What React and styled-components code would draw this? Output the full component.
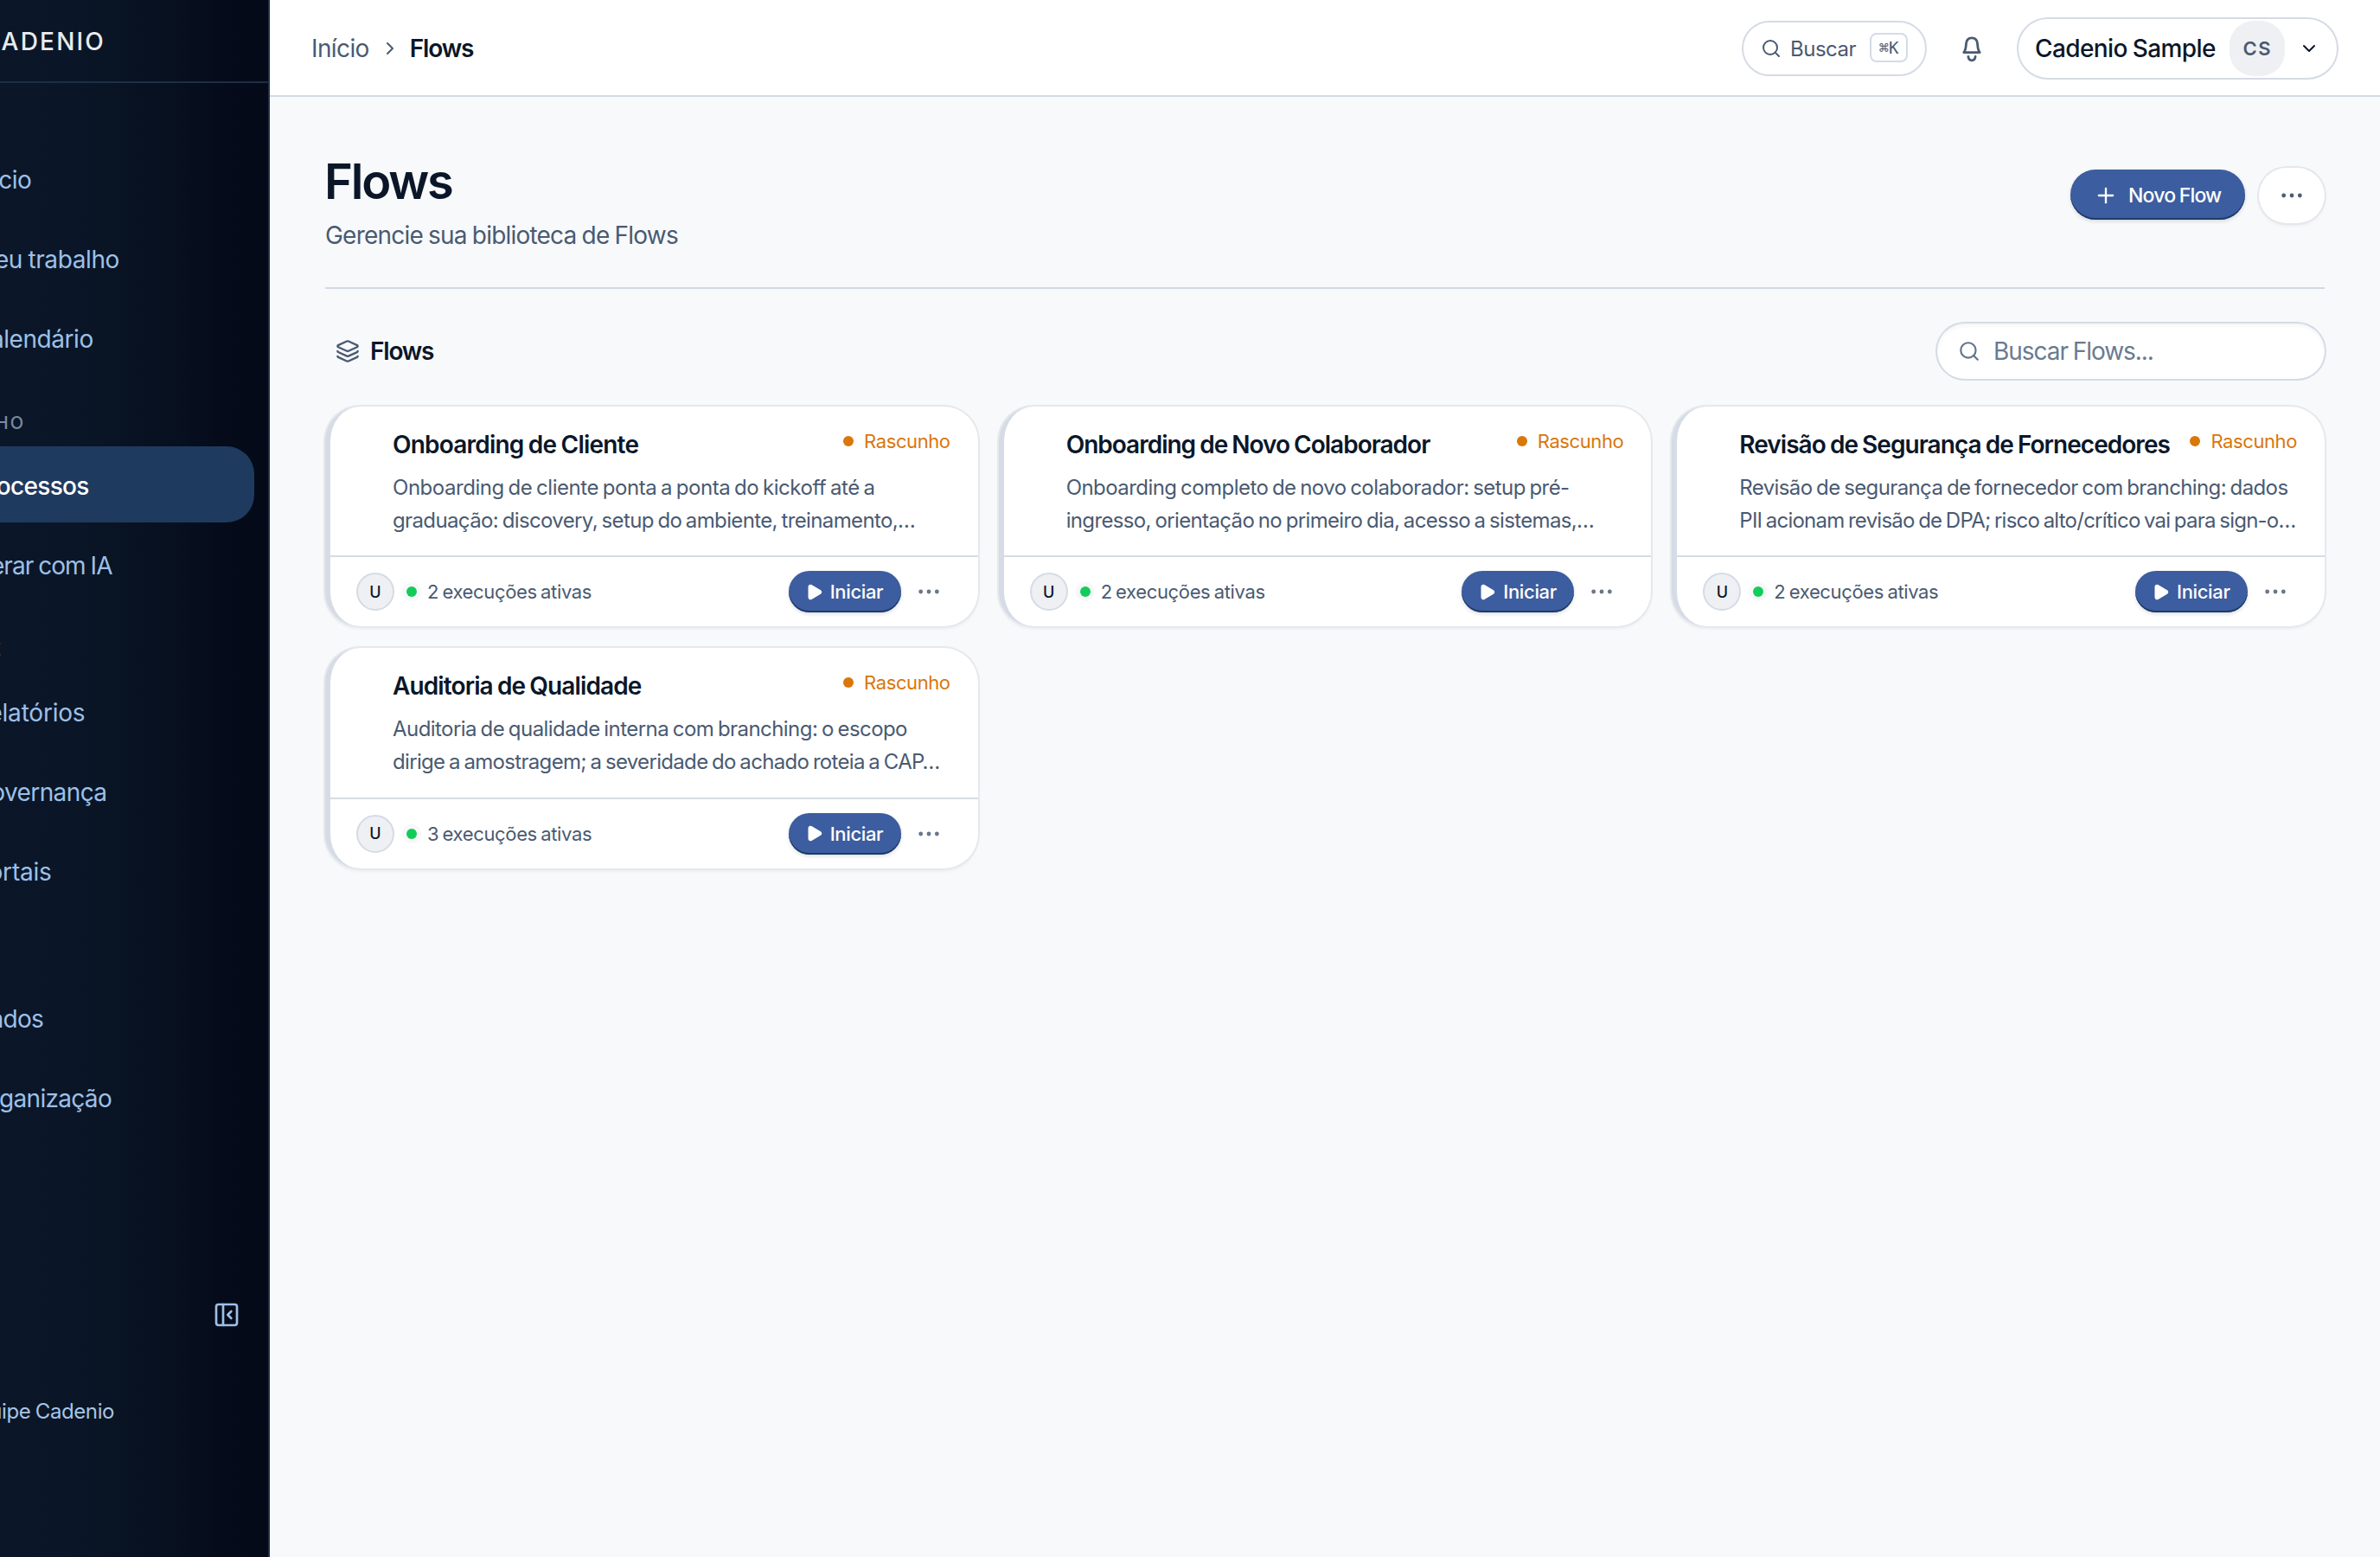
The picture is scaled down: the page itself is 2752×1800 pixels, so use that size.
import React from 'react';
import styled, { createGlobalStyle } from 'styled-components';
import {
  ChevronDown,
  ChevronRight,
  Ellipsis,
  Layers,
  PanelLeftClose,
  Play,
  Plus,
  Search,
} from 'lucide-react';

const GlobalStyle = createGlobalStyle`
  * {
    box-sizing: border-box;
  }
  body {
    margin: 0;
    background: #f8f9fb;
    color: #0b1729;
    font-family: Inter, 'Liberation Sans', sans-serif;
    overflow: hidden;
  }
  button {
    font-family: inherit;
    cursor: pointer;
  }
  h1, h2, h3, p {
    margin: 0;
  }
`;

const Page = styled.div`
  display: flex;
  width: 100%;
  height: 1800px;
`;

/* ---------- sidebar ---------- */

const Sidebar = styled.aside`
  display: flex;
  flex-direction: column;
  flex: none;
  width: 312px;
  overflow: hidden;
  border-right: 2px solid #1e2f46;
  background: linear-gradient(90deg, #0b1728 0%, #0a1627 28%, #081222 50%, #07101f 66%, #050b1a 82%, #050a19 100%);
  white-space: nowrap;
`;

const Brand = styled.div`
  display: flex;
  align-items: center;
  flex: none;
  height: 96px;
  padding-top: 2px;
  border-bottom: 2px solid #1d2e48;
  color: #e9ebee;
  font-size: 28px;
  font-weight: 500;
  letter-spacing: 2.2px;

  span {
    margin-left: -20.5px;
  }
`;

const Nav = styled.nav`
  padding-top: 66px;
  margin-left: -98px;
`;

const NavGroup = styled.div`
  display: flex;
  flex-direction: column;
  gap: 4px;
`;

const NavLabel = styled.div`
  display: flex;
  align-items: flex-end;
  height: 82px;
  padding: 0 0 17px 2px;
  color: #7e8a9c;
  font-size: 20px;
  font-weight: 500;
  line-height: 20px;
  letter-spacing: 2px;
`;

const NavItem = styled.a`
  display: flex;
  align-items: center;
  height: 88px;
  margin-right: 16px;
  padding: 3px 0 0 67px;
  border-radius: 32px;
  background: ${({ $active }) => ($active ? '#1f3a5f' : 'transparent')};
  color: ${({ $active }) => ($active ? '#ffffff' : '#9dc0e8')};
  font-size: 28px;
  font-weight: ${({ $active }) => ($active ? 500 : 400)};
  letter-spacing: ${({ $tracking }) => $tracking}px;
  word-spacing: -1px;
`;

const SidebarFooter = styled.div`
  display: flex;
  flex-direction: column;
  gap: 81px;
  margin-top: auto;
  padding-bottom: 153px;
`;

const CollapseButton = styled.button`
  display: flex;
  align-self: flex-end;
  margin-right: 32px;
  padding: 0;
  border: 0;
  background: none;
  color: #9dc0e8;
`;

const Team = styled.div`
  margin-left: -40px;
  color: #a9c4e4;
  font-size: 24px;
  line-height: 30px;
  letter-spacing: -0.4px;
  word-spacing: -1px;
`;

/* ---------- top bar ---------- */

const Main = styled.main`
  flex: 1;
  min-width: 0;
`;

const TopBar = styled.header`
  display: flex;
  align-items: center;
  justify-content: space-between;
  height: 112px;
  padding: 2px 48px 0;
  border-bottom: 2px solid #d3d9e5;
  background: #ffffff;
`;

const Breadcrumb = styled.div`
  display: flex;
  align-items: center;
  gap: 12px;
  color: #4a5a71;
  font-size: 28px;
  letter-spacing: -0.6px;

  strong {
    margin-left: -1px;
    color: #0b1729;
    font-weight: 600;
    letter-spacing: -1.2px;
  }
`;

const TopActions = styled.div`
  display: flex;
  align-items: center;
`;

const QuickSearch = styled.button`
  display: flex;
  align-items: center;
  width: 214px;
  height: 64px;
  padding: 0 20px;
  border: 2px solid #d5dbe6;
  border-radius: 32px;
  background: #ffffff;
  color: #4a5a71;
  font-size: 24px;
  letter-spacing: -0.5px;

  span {
    margin-left: 10px;
  }
`;

const Kbd = styled.kbd`
  display: flex;
  align-items: center;
  justify-content: center;
  width: 44px;
  height: 34px;
  margin: -2px 0 0 auto;
  border: 2px solid #d5dbe6;
  border-radius: 8px;
  font: 19px 'DejaVu Sans Mono', monospace;
  letter-spacing: 0;
`;

const BellButton = styled.button`
  display: flex;
  margin: 0 36px;
  padding: 0;
  border: 0;
  background: none;
  color: #4a5a71;
`;

const UserMenu = styled.button`
  display: flex;
  align-items: center;
  justify-content: space-between;
  width: 372px;
  height: 72px;
  padding: 0 20px 0 19px;
  border: 2px solid #d5dbe6;
  border-radius: 36px;
  background: #ffffff;
  color: #0b1729;
  font-size: 28px;
  font-weight: 500;
  letter-spacing: -0.6px;
  word-spacing: -1px;
`;

const UserAvatar = styled.span`
  display: flex;
  align-items: center;
  justify-content: center;
  width: 64px;
  height: 64px;
  padding-left: 1px;
  border-radius: 28px;
  background: #eff0f4;
  color: #4a5a71;
  font-size: 22px;
  font-weight: 600;
  letter-spacing: 1.5px;
`;

/* ---------- page content ---------- */

const Content = styled.div`
  padding: 66px 64px 0;
`;

const PageHead = styled.div`
  display: flex;
  justify-content: space-between;
  height: 156px;
  border-bottom: 2px solid #d3d9e5;
`;

const Title = styled.h1`
  margin-left: -1px;
  font-size: 56px;
  font-weight: 590;
  line-height: 64px;
  letter-spacing: -2.2px;
`;

const Subtitle = styled.p`
  margin-top: 10px;
  color: #4a5a71;
  font-size: 28px;
  font-weight: 370;
  line-height: 40px;
  letter-spacing: -0.79px;
  word-spacing: -1px;
`;

const HeadActions = styled.div`
  display: flex;
  align-items: center;
  gap: 16px;
  height: 64px;
  margin-top: 16px;
`;

const NewFlowButton = styled.button`
  display: flex;
  align-items: center;
  gap: 12px;
  width: 202px;
  height: 58px;
  margin-bottom: 2px;
  padding: 1px 0 0 27px;
  border: 0;
  border-radius: 29px;
  background: #3c5d9f;
  box-shadow: inset 0 -2px 0 #1f3b66, 0 2px 4px rgba(11, 23, 41, 0.14);
  color: #ffffff;
  font-size: 23px;
  font-weight: 500;
  letter-spacing: -0.8px;
  word-spacing: -1px;
  white-space: nowrap;
`;

const MoreButton = styled.button`
  display: flex;
  align-items: center;
  justify-content: center;
  width: 76px;
  height: 64px;
  padding: 0;
  border: 0;
  border-radius: 32px;
  background: #ffffff;
  box-shadow: 0 0 0 2px #e5e7ec, 0 3px 4px rgba(11, 23, 41, 0.06);
  color: #4a5a71;
`;

const SectionHead = styled.div`
  display: flex;
  align-items: center;
  justify-content: space-between;
  margin: 40px 0 31.5px;
`;

const SectionTitle = styled.h2`
  display: flex;
  align-items: center;
  gap: 12px;
  padding-left: 12px;
  font-size: 28px;
  font-weight: 600;
  letter-spacing: -1.2px;

  svg {
    color: #4a5a71;
  }
`;

const FlowSearch = styled.label`
  display: flex;
  align-items: center;
  gap: 15px;
  width: 448px;
  height: 64px;
  padding-left: 24px;
  border-radius: 32px;
  background: #ffffff;
  box-shadow: 0 0 0 2px #d5dbe6, inset 0 3px 4px rgba(11, 23, 41, 0.04);
  color: #64748a;

  input {
    width: 340px;
    padding: 0;
    border: 0;
    outline: none;
    background: none;
    font: 28px Inter, 'Liberation Sans', sans-serif;
    letter-spacing: -1.05px;
    word-spacing: -1px;
  }
  input::placeholder {
    color: #6b7a90;
    opacity: 1;
  }
`;

const CardGrid = styled.div`
  display: grid;
  grid-template-columns: repeat(3, minmax(0, 1fr));
  gap: 24.7px 24px;
`;

const Card = styled.article`
  border-left: 6px solid #d5dce6;
  border-radius: 40px;
  background: #ffffff;
  box-shadow: 0 0 0 2px #e6e8ec, 0 3px 3px 1px rgba(11, 23, 41, 0.04);
`;

const CardBody = styled.div`
  height: 172.9px;
  padding: 24px 32px 0 72px;
`;

const CardTop = styled.div`
  display: flex;
  justify-content: space-between;
  white-space: nowrap;
`;

const CardTitle = styled.h3`
  font-size: 28px;
  font-weight: 600;
  line-height: 40px;
  letter-spacing: ${({ $tracking }) => $tracking}px;
  word-spacing: -1px;
`;

const Status = styled.span`
  display: flex;
  align-items: center;
  gap: 12px;
  height: 33px;
  color: #d9770a;
  font-size: 22px;
  font-weight: 430;
  letter-spacing: -0.4px;
`;

const Dot = styled.i`
  width: 12px;
  height: 12px;
  border-radius: 50%;
  background: ${({ $color }) => $color};
  box-shadow: ${({ $halo }) => ($halo ? '0 0 0 5px #f7f8fa' : 'none')};
`;

const Description = styled.p`
  margin-top: 11px;
  color: #4a5a71;
  font-size: 24px;
  font-weight: 370;
  line-height: 38.4px;
  word-spacing: -1.5px;
  white-space: nowrap;
`;

const Line = styled.span`
  display: block;
  letter-spacing: ${({ $tracking }) => $tracking}px;
`;

const CardFooter = styled.div`
  display: flex;
  align-items: center;
  height: 81.8px;
  padding: 0 41px 0 30px;
  border-top: 2px solid #d5dce6;
`;

const OwnerAvatar = styled.span`
  display: flex;
  align-items: center;
  justify-content: center;
  width: 44px;
  height: 44px;
  margin-right: 14px;
  border: 2px solid #d5dbe6;
  border-radius: 50%;
  background: #eef0f3;
  font-size: 18px;
  font-weight: 500;
`;

const Runs = styled.span`
  margin-left: 12px;
  color: #4a5a71;
  font-size: 22px;
  letter-spacing: -0.35px;
  word-spacing: -1.5px;
`;

const StartButton = styled.button`
  display: flex;
  align-items: center;
  gap: 8px;
  width: 130px;
  height: 48px;
  margin: 0 16px 0 auto;
  padding: 0 0 0 19px;
  border: 0;
  border-radius: 24px;
  background: #3c5d9f;
  box-shadow: inset 0 -2px 0 #1f3b66, 0 2px 4px rgba(11, 23, 41, 0.14);
  color: #ffffff;
  font-size: 22px;
  font-weight: 500;
  letter-spacing: -0.35px;
`;

const CardMenu = styled.button`
  display: flex;
  padding: 0;
  border: 0;
  background: none;
  color: #64748a;
`;

const navGroups = [
  {
    items: [
      { label: 'Início', tracking: -0.5 },
      { label: 'Meu trabalho', tracking: -0.4 },
      { label: 'Calendário', tracking: -0.45 },
    ],
  },
  {
    label: 'TRABALHO',
    items: [
      { label: 'Processos', tracking: -0.7, active: true },
      { label: 'Gerar com IA', tracking: -0.95 },
    ],
  },
  {
    label: 'ANÁLISE',
    items: [
      { label: 'Relatórios', tracking: -0.2 },
      { label: 'Governança', tracking: -0.6 },
      { label: 'Portais', tracking: -0.2 },
    ],
  },
  {
    label: 'ADMIN',
    items: [
      { label: 'Dados', tracking: -0.7 },
      { label: 'Organização', tracking: -0.7 },
    ],
  },
];

const flows = [
  {
    title: 'Onboarding de Cliente',
    tracking: -0.79,
    runs: 2,
    lines: [
      ['Onboarding de cliente ponta a ponta do kickoff até a', -0.46],
      ['graduação: discovery, setup do ambiente, treinamento,…', -0.63],
    ],
  },
  {
    title: 'Onboarding de Novo Colaborador',
    tracking: -1,
    runs: 2,
    lines: [
      ['Onboarding completo de novo colaborador: setup pré-', -0.56],
      ['ingresso, orientação no primeiro dia, acesso a sistemas,…', -0.64],
    ],
  },
  {
    title: 'Revisão de Segurança de Fornecedores',
    tracking: -0.96,
    runs: 2,
    lines: [
      ['Revisão de segurança de fornecedor com branching: dados', -0.62],
      ['PII acionam revisão de DPA; risco alto/crítico vai para sign-o…', -0.76],
    ],
  },
  {
    title: 'Auditoria de Qualidade',
    tracking: -0.89,
    runs: 3,
    lines: [
      ['Auditoria de qualidade interna com branching: o escopo', -0.56],
      ['dirige a amostragem; a severidade do achado roteia a CAP…', -0.67],
    ],
  },
];

const BellIcon = () => (
  <svg
    width='32'
    height='34'
    viewBox='0 0 32 34'
    fill='none'
    stroke='currentColor'
    strokeWidth='2.8'
    strokeLinecap='round'
    strokeLinejoin='round'
  >
    <path d='M6.8 21.6h18.4c-1.7-2.2-2.4-4.6-2.6-9.6-.2-4.5-2.6-7.2-6.6-7.2S9.6 7.5 9.4 12c-.2 5-.9 7.4-2.6 9.6z' />
    <path d='M11.9 26.4c.3 2.9 1.7 4.4 4.1 4.4s3.8-1.500 4.100-4.400' />
  </svg>
);

const FlowCard = ({ flow }) => {
  return (
    <Card>
      <CardBody>
        <CardTop>
          <CardTitle $tracking={flow.tracking}>{flow.title}</CardTitle>
          <Status>
            <Dot $color='#d9770a' />
            Rascunho
          </Status>
        </CardTop>
        <Description>
          {flow.lines.map(([text, tracking]) => (
            <Line key={text} $tracking={tracking}>
              {text}
            </Line>
          ))}
        </Description>
      </CardBody>
      <CardFooter>
        <OwnerAvatar>U</OwnerAvatar>
        <Dot $color='#12cc5a' $halo />
        <Runs>{flow.runs} execuções ativas</Runs>
        <StartButton>
          <Play size={21} fill='currentColor' />
          Iniciar
        </StartButton>
        <CardMenu aria-label='Mais opções'>
          <Ellipsis size={32} strokeWidth={1.6} />
        </CardMenu>
      </CardFooter>
    </Card>
  );
};

const App = () => {
  return (
    <Page>
      <GlobalStyle />
      <Sidebar>
        <Brand>
          <span>CADENIO</span>
        </Brand>
        <Nav>
          {navGroups.map((group, i) => (
            <React.Fragment key={i}>
              {group.label && <NavLabel>{group.label}</NavLabel>}
              <NavGroup>
                {group.items.map((item) => (
                  <NavItem
                    key={item.label}
                    $active={item.active}
                    $tracking={item.tracking}
                  >
                    {item.label}
                  </NavItem>
                ))}
              </NavGroup>
            </React.Fragment>
          ))}
        </Nav>
        <SidebarFooter>
          <CollapseButton aria-label='Recolher menu'>
            <PanelLeftClose size={32} />
          </CollapseButton>
          <Team>Equipe Cadenio</Team>
        </SidebarFooter>
      </Sidebar>
      <Main>
        <TopBar>
          <Breadcrumb>
            Início
            <ChevronRight size={24} />
            <strong>Flows</strong>
          </Breadcrumb>
          <TopActions>
            <QuickSearch>
              <Search size={24} />
              <span>Buscar</span>
              <Kbd>⌘K</Kbd>
            </QuickSearch>
            <BellButton aria-label='Notificações'>
              <BellIcon />
            </BellButton>
            <UserMenu>
              Cadenio Sample
              <UserAvatar>CS</UserAvatar>
              <ChevronDown size={24} />
            </UserMenu>
          </TopActions>
        </TopBar>
        <Content>
          <PageHead>
            <div>
              <Title>Flows</Title>
              <Subtitle>Gerencie sua biblioteca de Flows</Subtitle>
            </div>
            <HeadActions>
              <NewFlowButton>
                <Plus size={28} />
                Novo Flow
              </NewFlowButton>
              <MoreButton aria-label='Mais opções'>
                <Ellipsis size={32} strokeWidth={1.6} />
              </MoreButton>
            </HeadActions>
          </PageHead>
          <SectionHead>
            <SectionTitle>
              <Layers size={28} />
              Flows
            </SectionTitle>
            <FlowSearch>
              <Search size={26} />
              <input placeholder='Buscar Flows...' />
            </FlowSearch>
          </SectionHead>
          <CardGrid>
            {flows.map((flow) => (
              <FlowCard key={flow.title} flow={flow} />
            ))}
          </CardGrid>
        </Content>
      </Main>
    </Page>
  );
};

export default App;
